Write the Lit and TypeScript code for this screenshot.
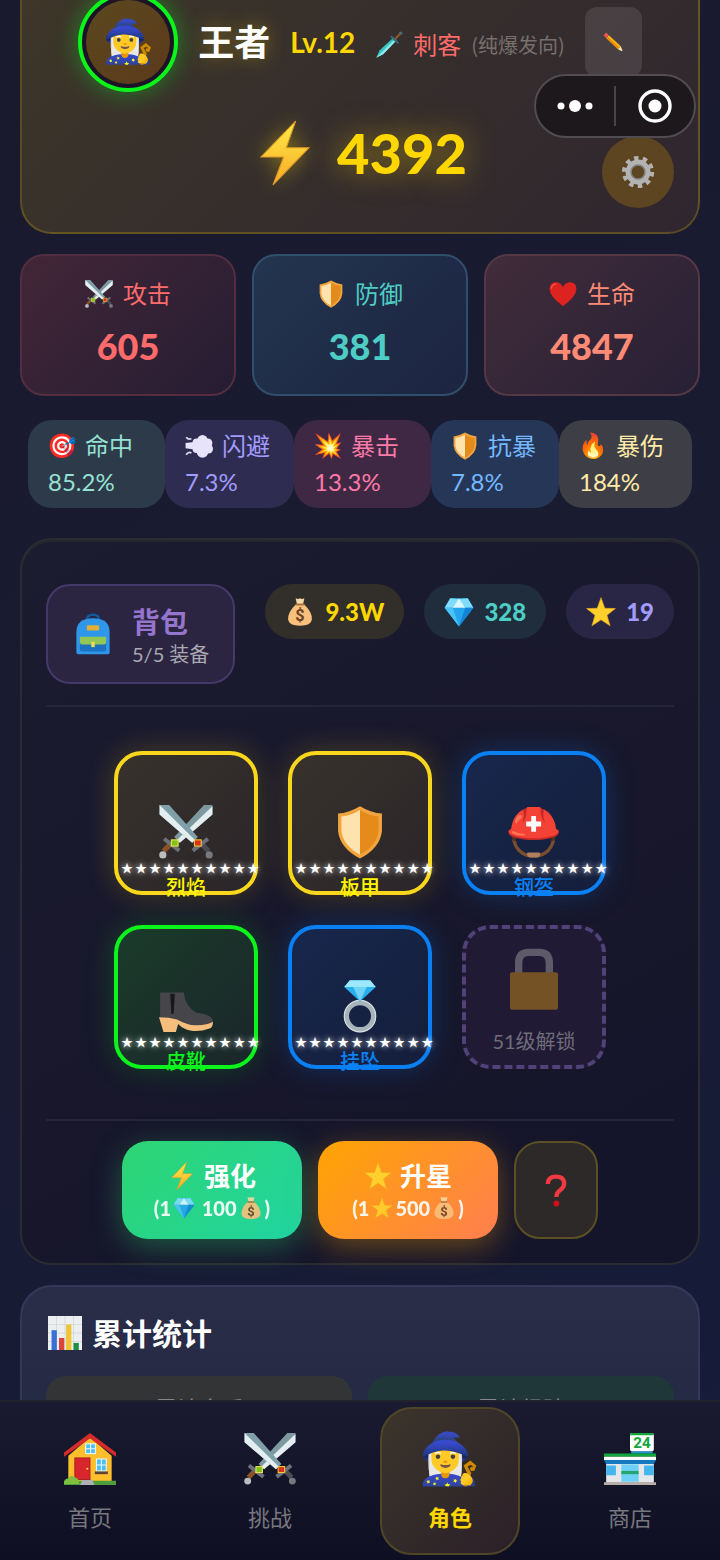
import { LitElement, html, css } from "lit";
import { customElement, state } from "lit/decorators.js";

/* Item icons, each on a 48 x 48 grid. */
const swords = html`<svg viewBox="0 0 48 48">
  <path d="M11 34 4 41" stroke="#8a5226" stroke-width="4.5" /><circle cx="3.4" cy="44.4" r="3.2" fill="#b9bcc0" />
  <path d="M37 34 44 41" stroke="#4b4d52" stroke-width="4.5" /><circle cx="44.6" cy="44.4" r="3.2" fill="#77797e" />
  <path d="M4.500 30 18 40.500M43.500 30 30 40.500" stroke="#6c7078" stroke-width="3.600" />
  <path d="M47.500 0 40 0 13.500 28.500 18.500 33.500 47.500 8.500Z" fill="#7d99a0" /><path d="M47.500 1 47.500 8.500 18.500 33.500 16 31Z" fill="#e4eef0" />
  <path d="M.5 0 9 0 34.500 28.500 29.500 33.500 .5 8.500Z" fill="#7fa0a8" /><path d="M.5 0 .5 8.500 29.500 33.500 32 31Z" fill="#e4eef0" />
  <rect x="11" y="31" width="6" height="5.500" fill="#7fc21c" stroke="#e9e253" /><rect x="31.500" y="31" width="6" height="5.500" fill="#d8321e" stroke="#f5c33a" />
</svg>`;
const shield = html`<svg viewBox="0 0 48 48">
  <path d="M24 1Q34 7 43.500 7.500V23Q42 38 24 47.500 6 38 4.500 23V7.500Q14 7 24 1Z" fill="#f2a53f" />
  <path d="M24 4.500Q16 9.500 7.500 10.200V23Q9 36 24 44Z" fill="#ffe3ae" /><path d="M24 4.500Q32 9.500 40.500 10.200V23Q39 36 24 44Z" fill="#e58b1c" />
</svg>`;
const heart = html`<svg viewBox="0 0 48 48"><path d="M24 45Q1 28 1 15.500 1 4 12 4 20 4 24 12 28 4 36 4 47 4 47 15.500 47 28 24 45Z" fill="#dd2320" /><path d="M4 15Q5 7 12 7" stroke="#f4574b" stroke-width="2" fill="none" /></svg>`;
const puff = html`<svg viewBox="0 0 48 48"><g fill="#e6e3fa"><circle cx="30" cy="14" r="9" /><circle cx="39" cy="19" r="8" /><circle cx="40" cy="29" r="8" /><circle cx="30" cy="34" r="10" /><circle cx="20" cy="29" r="7" /><circle cx="20" cy="18" r="7" /><circle cx="30" cy="24" r="12" /><path d="M1 19 16 17V30L1 28Z" /></g><path d="M2 9Q6 14 11 11M2 39Q6 33 11 36" stroke="#dcd9f2" stroke-width="3" fill="none" /></svg>`;
const bolt = html`<svg viewBox="0 0 48 48"><defs><linearGradient id="b" x2="0" y2="1"><stop stop-color="#ffec45" /><stop offset="1" stop-color="#f7a928" /></linearGradient></defs><path d="M32 0 6 27H23L15 48 42 20H25Z" fill="url(#b)" stroke="#dd9a25" stroke-width=".8" /></svg>`;
const star = html`<svg viewBox="0 0 48 48"><path d="M24 1 30 18 47 18.500 33.500 29 38.500 46 24 36.500 9.500 46 14.500 29 1 18.500 18 18Z" fill="#ffd02c" stroke="#f2a81f" stroke-width="1" /></svg>`;
const diamond = html`<svg viewBox="0 0 48 48"><path d="M10 2H38L47 17 24 47 1 17Z" fill="#24a5ee" /><path d="M10 2 1 17H14L24 3ZM38 2 47 17H34L24 3Z" fill="#7fdcfb" /><path d="M24 2 14 17H34Z" fill="#d8f6ff" /><path d="M1 17H14L24 47Z" fill="#4cc3f6" /><path d="M34 17H47L24 47Z" fill="#1184d6" /></svg>`;
const money = html`<svg viewBox="0 0 48 48"><path d="M17 2Q21 4 24 2 27 4 31 2L29 11H19Z" fill="#f6d9a8" /><path d="M18 11H30Q44 24 43 36 42 46 24 46 6 46 5 36 4 24 18 11Z" fill="#f8c07c" /><path d="M17 12H31" stroke="#a8703c" stroke-width="3" /><text x="24" y="39" text-anchor="middle" font-size="26" font-weight="700" fill="#6a4026">$</text></svg>`;
const backpack = html`<svg viewBox="0 0 48 48"><path d="M17 8Q17 2 24 2 31 2 31 8" stroke="#12599a" stroke-width="3" fill="none" /><path d="M5 22Q5 6 24 6 43 6 43 22V45Q43 47 41 47H7Q5 47 5 45Z" fill="#2e97ea" /><rect x="17" y="14" width="14" height="6" rx="1.500" fill="#e3af37" /><path d="M9 33H39V42Q39 44 36 44H12Q9 44 9 42Z" fill="#1a72c0" /><path d="M9 27H39V33Q39 36 35 36H13Q9 36 9 33Z" fill="#92c655" /><rect x="22" y="33" width="4" height="6" fill="#f1dc52" /></svg>`;
const boot = html`<svg viewBox="0 0 48 48"><path d="M1 12H22Q23 24 33 30 46 31 48 37L44 42H31L18 38 1 35Z" fill="#46464a" /><path d="M10 13H14L13 31H11Z" fill="#18181b" /><path d="M0 34Q9 34 16 36 27 42 34 41 43 41 48 38 48 43 45 44 36 47 29 46 22 45 17 40L15 47H4Z" fill="#f6be7c" /></svg>`;
const ring = html`<svg viewBox="0 0 48 48"><circle cx="24" cy="33" r="12" fill="none" stroke="#a9b4ba" stroke-width="4.500" /><circle cx="24" cy="33" r="14" fill="none" stroke="#d5dde0" stroke-width="1" /><path d="M15 1H33L38 7 24 20 10 7Z" fill="#29aeee" /><path d="M15 1H33L38 7H10Z" fill="#9de8fd" /><path d="M18 7H30L24 20Z" fill="#70d3f8" /></svg>`;
const lock = html`<svg viewBox="0 0 48 48"><path d="M12.500 20V12Q12.500 4 20 4H28Q35.500 4 35.500 12V20" fill="none" stroke="#9a9aa0" stroke-width="5.500" /><rect x="6" y="19" width="36" height="28" rx="1.500" fill="#c98a18" /></svg>`;
const dagger = html`<svg viewBox="0 0 48 48"><path d="M2 46 8 33 32 11 37 16 14 40Z" fill="#3bc4c8" /><path d="M2 46 34.500 13.500 37 16 14 40Z" fill="#8deaea" /><path d="M27 9 40 21" stroke="#35697c" stroke-width="3.500" /><path d="M35 13 43 5" stroke="#8a5226" stroke-width="4" /><circle cx="44" cy="4" r="3" fill="#4c6672" /></svg>`;
const pencil = html`<svg viewBox="0 0 48 48"><path d="M9 15 15 9 41 33 35 40Z" fill="#fbb216" /><path d="M9 15 12 12 38 36.500 35 40Z" fill="#e88a0c" /><path d="M3 9 9 3 15 9 9 15Z" fill="#ee5350" /><path d="M35 40 41 33 46 46Z" fill="#f5dfae" /><path d="M42 45 45 42 46 46Z" fill="#3a3230" /></svg>`;
const gear = html`<svg viewBox="0 0 48 48" fill="none"><circle cx="24" cy="24" r="19.500" stroke="#b3b3b3" stroke-width="6.500" stroke-dasharray="6.200 6.050" /><circle cx="24" cy="24" r="13.500" stroke="#b3b3b3" stroke-width="8" /><circle cx="24" cy="24" r="10" stroke="#808080" stroke-width="2" /></svg>`;
const question = html`<svg viewBox="0 0 48 48"><path d="M12.500 15.500Q12.500 5 24 5 35.500 5 35.500 15 35.500 20 29.500 24.500 24.500 28 24.500 34" fill="none" stroke="#ee3a40" stroke-width="6" /><circle cx="24.500" cy="43" r="4.200" fill="#cf1018" /></svg>`;
const chart = html`<svg viewBox="0 0 48 48"><path d="M0 0H48V48H0Z" fill="#eceff0" /><path d="M0 12H48M0 24H48M0 36H48M12 0V48M24 0V48M36 0V48" stroke="#cfd5d8" stroke-width="1" /><path d="M5 20H12.500V48H5Z" fill="#3b6fd8" /><path d="M15.500 31H23V48H15.500Z" fill="#db4437" /><path d="M25.500 12H33V48H25.500Z" fill="#f0c433" /><path d="M36 38H43.500V48H36Z" fill="#1f8f45" /></svg>`;
const house = html`<svg viewBox="0 0 48 48"><path d="M24 4 44 21V45H4V21Z" fill="#fdbf2c" /><path d="M0 22V18L24 0 48 18V22L24 5Z" fill="#d42b2b" /><path d="M0 48V44H48V48Z" fill="#4f9e3c" /><path d="M15 48 17 43H26L28 48Z" fill="#aab0b4" /><rect x="10" y="23" width="14" height="20" fill="#d8262c" stroke="#a51b22" stroke-width=".8" /><circle cx="21.500" cy="33" r="1" fill="#ffd54f" /><rect x="20" y="10" width="9" height="9" fill="#4fc0ee" stroke="#e5f7fd" /><path d="M24.500 10V19M20 14.500H29M34.500 24V35M30 29.500H39" stroke="#e5f7fd" /><path d="M30 24H39V35H30Z" fill="#4fc0ee" stroke="#e5f7fd" /><path d="M34.500 24V35M30 29.500H39" stroke="#e5f7fd" /><rect x="28.500" y="35.500" width="12" height="2.500" fill="#5c4237" /><path d="M0 47Q0 42 4 42 6 38 10 41 14 41 14 47Z" fill="#7fbf3f" /></svg>`;
const store = html`<svg viewBox="0 0 48 48"><rect x="24" y="0" width="22" height="17" rx="2" fill="#fff" /><path d="M24 2Q24 0 26 0H44Q46 0 46 2Z" fill="#12a63c" /><text x="35" y="14" text-anchor="middle" font-size="14" font-weight="700" fill="#12a63c">24</text><path d="M25 17H45V19H25Z" fill="#2096d8" /><path d="M2 27H46V46H2Z" fill="#e4e7ea" /><path d="M0 19H48V22H0Z" fill="#12a63c" /><path d="M0 22H48V25H0Z" fill="#fff" /><path d="M0 25H48L46 28.500H2Z" fill="#1579c2" /><path d="M2 30H11V39H2ZM37 30H46V39H37Z" fill="#45b5ee" /><path d="M16 29H32V45H16Z" fill="#6fd0f6" /><path d="M16 35H32V38H16Z" fill="#26a56c" /><path d="M0 45.500H48V48H0Z" fill="#b9aeaa" /></svg>`;

@customElement("app-root")
export class AppRoot extends LitElement {
  @state() private tab = "角色";

  static styles = css`
    :host {
      display: flex;
      flex-direction: column;
      height: 100vh;
      position: relative;
      overflow: hidden;
      color: #fff;
      font-family: Lato, "Noto Sans CJK SC", "Noto Color Emoji", sans-serif;
      font-size: 24px;
      background: linear-gradient(150deg, #1a1a2e 0%, #191b31 45%, #151c3a 100%);
    }
    * { box-sizing: border-box; }
    button { font: inherit; color: inherit; border: 0; padding: 0; margin: 0; background: none; cursor: pointer; }
    h2 { margin: 0; }
    .e { display: inline-flex; align-items: center; justify-content: center; flex: none; line-height: 1; font-family: "Noto Color Emoji", sans-serif; font-weight: 400; }
    .e svg { display: block; width: 100%; height: 100%; overflow: visible; font-family: Roboto, sans-serif; }
    .e22 { width: 22px; height: 22px; }
    .e24 { width: 24px; height: 24px; }
    .e28 { width: 28px; height: 28px; font-size: 24px; }
    .e30 { width: 30px; height: 30px; }
    .e34 { width: 34px; height: 34px; }
    .e42 { width: 42px; height: 42px; }
    .e50 { width: 50px; height: 50px; font-size: 42px; }
    .e54 { width: 54px; height: 54px; font-size: 46px; }
    .e64 { width: 64px; height: 64px; }

    .view { flex: 1; min-height: 0; overflow: hidden; }
    .content { margin-top: -40px; padding: 0 20px; display: flex; flex-direction: column; }

    .hero {
      position: relative;
      border: 2px solid rgba(255, 215, 0, 0.2);
      border-radius: 32px;
      padding: 30px 24px 45px;
      background: linear-gradient(135deg, #3e3628 0%, #362f2c 45%, #30262f 100%);
    }
    .who { display: flex; align-items: center; justify-content: center; gap: 20px; white-space: nowrap; }
    .avatar {
      width: 100px; height: 100px; border-radius: 50%; flex: none;
      display: flex; align-items: center; justify-content: center;
      border: 4px solid #0bf41c; background: #1c1426;
      box-shadow: 0 0 24px rgba(0, 255, 30, 0.4);
    }
    .face { width: 84px; height: 84px; border-radius: 50%; display: flex; align-items: center; justify-content: center; background: linear-gradient(135deg, #5a4820, #5c3a1a); }
    .name { font-size: 36px; font-weight: 700; line-height: 48px; text-shadow: 0 0 20px rgba(255, 215, 0, 0.35); }
    .level { font-size: 28px; font-weight: 700; line-height: 48px; color: #ffd700; }
    .job { display: flex; align-items: center; gap: 10px; padding-top: 6px; line-height: 36px; color: #ff6b6b; }
    .job small { font-size: 20px; color: #77706e; font-family: "Noto Sans CJK SC", sans-serif; }
    .edit { width: 57px; height: 70px; border-radius: 12px; background: rgba(255, 255, 255, 0.1); }
    .power { margin-top: 29px; padding-bottom: 2px; display: flex; align-items: center; justify-content: center; gap: 20px; line-height: 64px; font-size: 56px; font-weight: 900; color: #ffd700; text-shadow: 0 0 30px rgba(255, 215, 0, 0.5); }
    .power svg { filter: drop-shadow(0 0 10px rgba(255, 215, 0, 0.4)); }
    .gear { position: absolute; right: 24px; bottom: 24px; width: 72px; height: 72px; border-radius: 50%; background: #5e4522; }
    .edit, .gear, .help { display: flex; align-items: center; justify-content: center; }

    .capsule {
      position: absolute; z-index: 2; top: 74px; right: 24px; width: 162px; height: 64px;
      display: flex; align-items: center; border: 2px solid #504c50; border-radius: 32px; background: #1d181c;
    }
    .capsule button { flex: 1; height: 100%; display: flex; align-items: center; justify-content: center; }
    .sep { width: 2px; height: 40px; background: #48444a; }

    .stats { margin-top: 20px; display: grid; grid-template-columns: repeat(3, 1fr); gap: 16px; }
    .stat { border: 2px solid; border-radius: 24px; padding: 20px 0; text-align: center; }
    .stat-label { display: flex; align-items: center; justify-content: center; gap: 10px; line-height: 36px; }
    .stat-value { margin-top: 8px; padding-bottom: 2px; font-size: 36px; line-height: 52px; font-weight: 900; }
    .atk { color: #ff6b6b; border-color: #542e40; background: linear-gradient(135deg, #422637, #261d33); }
    .def { color: #4ecdc4; border-color: #304f6a; background: linear-gradient(135deg, #23354f, #1c2440); }
    .hp { color: #ff8a75; border-color: #553845; background: linear-gradient(135deg, #412c3a, #272035); }

    .minis { margin: 24px 8px 0; display: grid; grid-template-columns: 137fr 129fr 137fr 128fr 133fr; }
    .mini { border-radius: 24px; padding: 8px 0 8px 20px; line-height: 36px; }
    .mini-label { display: flex; align-items: center; gap: 9px; white-space: nowrap; }
    .hit { color: #95e1d3; background: #2d3a49; }
    .dodge { color: #a29bfe; background: #2e2c50; }
    .crit { color: #fd79a8; background: #3f2843; }
    .resist { color: #74b9ff; background: #263656; }
    .burst { color: #ffeaa7; background: #3e3e46; }

    .panel {
      margin-top: 30px; border: 2px solid #2b2b33; border-radius: 32px; padding: 44px 24px 24px;
      background: linear-gradient(150deg, #1c1c30, #18172b 50%, #14142a);
      box-shadow: inset 0 2px 0 #27272f;
    }
    .bag-row { display: flex; align-items: flex-start; justify-content: space-between; padding-bottom: 21px; border-bottom: 2px solid #25253a; }
    .bag { display: flex; align-items: center; gap: 18px; height: 100px; padding: 0 24px; border: 2px solid #453969; border-radius: 24px; background: #2b2542; text-align: left; }
    .bag-text { padding-top: 4px; }
    .bag-title { display: block; font-size: 28px; font-weight: 700; line-height: 36px; color: #9575cd; }
    .bag-sub { display: block; font-size: 20px; line-height: 28px; color: #aaa8b0; }
    .purse { display: flex; gap: 20px; }
    .coin { display: flex; align-items: center; gap: 10px; height: 55px; padding: 0 20px; border-radius: 28px; font-weight: 900; }
    .gold { color: #ffd700; background: #322e2a; }
    .gem { color: #4ecdc4; background: #1f2d3d; }
    .star { color: #a29bfe; background: #292645; }

    .slots { padding: 44px 0 50px; display: grid; grid-template-columns: repeat(3, 144px); gap: 30px; justify-content: center; }
    .slot { height: 144px; display: flex; flex-direction: column; align-items: center; padding-top: 50px; border: 4px solid; border-radius: 28px; }
    .stars { align-self: flex-start; width: max-content; display: flex; gap: 2px; padding-left: 3px; line-height: 18px; font-size: 12px; color: #fff; text-shadow: 0 0 6px rgba(255, 255, 255, 0.8); font-family: "Noto Sans CJK SC", sans-serif; }
    .slot-name { line-height: 20px; font-size: 20px; font-weight: 500; }
    .yellow { border-color: #f9d71c; background: linear-gradient(135deg, #38322c, #2a2529); box-shadow: 0 0 30px rgba(255, 215, 0, 0.2); }
    .yellow .slot-name { color: #fff600; }
    .blue { border-color: #0a80f5; background: linear-gradient(135deg, #17274c, #151e3b); box-shadow: 0 0 30px rgba(10, 128, 245, 0.25); }
    .blue .slot-name { color: #0a80f5; }
    .green { border-color: #0bf41c; background: linear-gradient(135deg, #1b3b2a, #1a262a); box-shadow: 0 0 30px rgba(11, 244, 28, 0.2); }
    .green .slot-name { color: #0bf41c; }
    .locked { padding-top: 18px; border-style: dashed; border-color: #51427a; background: #201a35; }
    .locked .e { opacity: 0.5; }
    .lock-text { margin-top: 16px; font-size: 20px; line-height: 28px; color: #706c7a; }

    .actions { border-top: 2px solid #25253a; padding-top: 20px; display: flex; justify-content: center; gap: 16px; }
    .act { width: 180px; height: 98px; border-radius: 26px; font-weight: 700; display: flex; flex-direction: column; align-items: center; justify-content: center; }
    .act-title { display: flex; align-items: center; gap: 8px; font-size: 26px; line-height: 36px; }
    .act-cost { display: flex; align-items: center; gap: 2px; font-size: 20px; font-weight: 900; line-height: 28px; opacity: 0.9; white-space: pre; }
    .forge { background: linear-gradient(135deg, #2ed573, #20d4a0); box-shadow: 0 8px 30px rgba(46, 213, 115, 0.35); }
    .rise { background: linear-gradient(135deg, #ffa502, #ff7f50); box-shadow: 0 8px 30px rgba(255, 165, 2, 0.35); }
    .help { width: 84px; height: 98px; border: 2px solid #5a5024; border-radius: 26px; background: #2d2928; }

    .totals { margin-top: 20px; border: 2px solid #35385a; border-radius: 32px; padding: 24px; background: linear-gradient(180deg, #2a2d47, #202742 100%); }
    .totals h2 { display: flex; align-items: center; gap: 10px; padding-left: 2px; font-size: 30px; line-height: 44px; font-weight: 700; }
    .cells { margin-top: 21px; display: grid; grid-template-columns: 1fr 1fr; gap: 16px; }
    .cell { height: 120px; padding-top: 19px; border-radius: 20px; text-align: center; font-size: 22px; line-height: 28px; color: #85878c; }
    .c1 { background: #333436; }
    .c2 { background: #1f3739; }

    nav { flex: none; height: 160px; padding-top: 5px; display: flex; justify-content: space-around; align-items: flex-start; border-top: 2px solid #22222e; background: linear-gradient(180deg, #1a1a30, #0f0f23); }
    nav button { width: 140px; height: 148px; display: flex; flex-direction: column; align-items: center; padding-top: 18px; gap: 12px; border: 2px solid transparent; border-radius: 32px; font-size: 22px; line-height: 30px; color: #77777f; }
    nav .e { width: 64px; height: 64px; font-size: 50px; }
    nav svg { padding: 6px; }
    nav button.on { color: #ffd700; font-weight: 700; border-color: #4f4628; background: linear-gradient(135deg, #3b352c, #2b2028); }
  `;

  private ico(art: unknown, size: number) {
    return html`<span class="e e${size}" aria-hidden="true">${art}</span>`;
  }

  render() {
    const stats: [string, unknown, string, string][] = [
      ["atk", swords, "攻击", "605"],
      ["def", shield, "防御", "381"],
      ["hp", heart, "生命", "4847"],
    ];
    const minis: [string, unknown, string, string][] = [
      ["hit", "🎯", "命中", "85.2%"],
      ["dodge", puff, "闪避", "7.3%"],
      ["crit", "💥", "暴击", "13.3%"],
      ["resist", shield, "抗暴", "7.8%"],
      ["burst", "🔥", "暴伤", "184%"],
    ];
    const slots: [string, unknown, string][] = [
      ["yellow", swords, "烈焰"],
      ["yellow", shield, "板甲"],
      ["blue", "⛑️", "钢盔"],
      ["green", boot, "皮靴"],
      ["blue", ring, "挂坠"],
    ];
    const tabs: [unknown, string][] = [[house, "首页"], [swords, "挑战"], ["🧙‍♀️", "角色"], [store, "商店"]];
    return html`
      <div class="view">
        <main class="content">
          <section class="hero">
            <div class="who">
              <div class="avatar"><div class="face">${this.ico("🧙‍♀️", 50)}</div></div>
              <span class="name">王者</span>
              <span class="level">Lv.12</span>
              <span class="job">${this.ico(dagger, 28)}<span>刺客</span><small>(纯爆发向)</small></span>
              <button class="edit" aria-label="编辑">${this.ico(pencil, 22)}</button>
            </div>
            <div class="power">${this.ico(bolt, 64)}<span>4392</span></div>
            <button class="gear" aria-label="设置">${this.ico(gear, 34)}</button>
          </section>

          <section class="stats">
            ${stats.map(([c, i, l, v]) => html`<div class="stat ${c}"><div class="stat-label">${this.ico(i, 28)}${l}</div><div class="stat-value">${v}</div></div>`)}
          </section>

          <section class="minis">
            ${minis.map(([c, i, l, v]) => html`<div class="mini ${c}"><div class="mini-label">${this.ico(i, 28)}${l}</div><div>${v}</div></div>`)}
          </section>

          <section class="panel">
            <div class="bag-row">
              <button class="bag">${this.ico(backpack, 42)}<span class="bag-text"><span class="bag-title">背包</span><span class="bag-sub">5/5 装备</span></span></button>
              <div class="purse">
                <span class="coin gold">${this.ico(money, 30)}9.3W</span>
                <span class="coin gem">${this.ico(diamond, 30)}328</span>
                <span class="coin star">${this.ico(star, 30)}19</span>
              </div>
            </div>
            <div class="slots">
              ${slots.map(([c, i, n]) => html`<button class="slot ${c}">${this.ico(i, 54)}<span class="stars">${Array.from({ length: 10 }, () => html`<span>★</span>`)}</span><span class="slot-name">${n}</span></button>`)}
              <button class="slot locked">${this.ico(lock, 64)}<span class="lock-text">51级解锁</span></button>
            </div>
            <div class="actions">
              <button class="act forge"><span class="act-title">${this.ico(bolt, 28)}强化</span><span class="act-cost">(1${this.ico(diamond, 22)}<span> 100</span>${this.ico(money, 24)}<span>)</span></span></button>
              <button class="act rise"><span class="act-title">${this.ico(star, 28)}升星</span><span class="act-cost">(1${this.ico(star, 22)}<span>500</span>${this.ico(money, 24)}<span>)</span></span></button>
              <button class="help" aria-label="帮助">${this.ico(question, 34)}</button>
            </div>
          </section>

          <section class="totals">
            <h2>${this.ico(chart, 34)}累计统计</h2>
            <div class="cells"><div class="cell c1">累计金币</div><div class="cell c2">累计经验</div></div>
          </section>
        </main>
      </div>
      <div class="capsule">
        <button aria-label="更多"><svg width="36" height="14" viewBox="0 0 36 14" fill="#fff"><circle cx="4" cy="7" r="3.5" /><circle cx="18" cy="7" r="6" /><circle cx="32" cy="7" r="3.5" /></svg></button>
        <span class="sep"></span>
        <button aria-label="关闭"><svg width="34" height="34" viewBox="0 0 34 34"><circle cx="17" cy="17" r="15" fill="none" stroke="#fff" stroke-width="3.4" /><circle cx="17" cy="17" r="6.5" fill="#fff" /></svg></button>
      </div>
      <nav>
        ${tabs.map(([i, l]) => html`<button class=${this.tab === l ? "on" : ""} @click=${() => (this.tab = l)}><span class="e" aria-hidden="true">${i}</span>${l}</button>`)}
      </nav>
    `;
  }
}
